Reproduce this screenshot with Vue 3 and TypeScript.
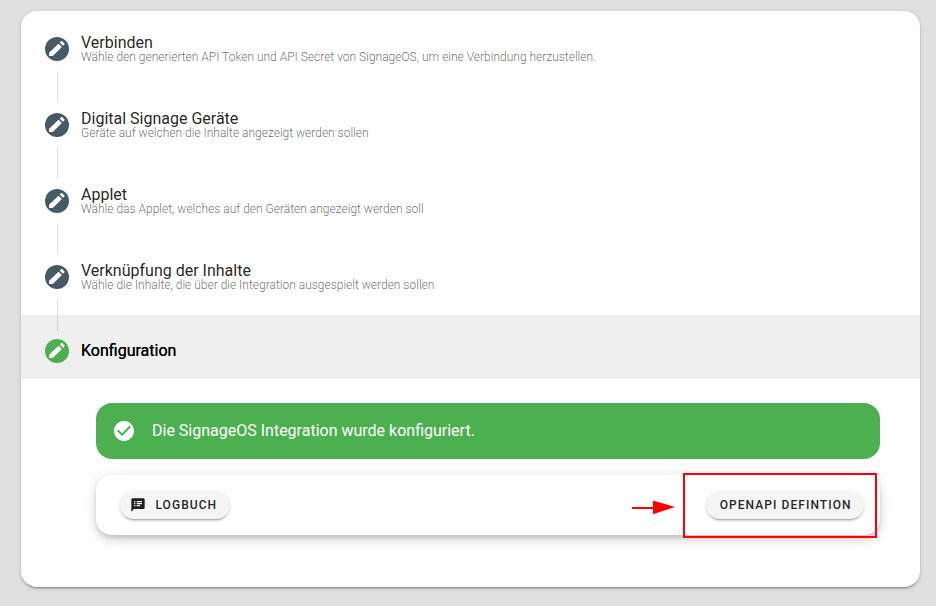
<script setup lang="ts">
interface Step {
  title: string
  hint: string
}

const steps: Step[] = [
  { title: 'Verbinden', hint: 'Wähle den generierten API Token und API Secret von SignageOS, um eine Verbindung herzustellen.' },
  { title: 'Digital Signage Geräte', hint: 'Geräte auf welchen die Inhalte angezeigt werden sollen' },
  { title: 'Applet', hint: 'Wähle das Applet, welches auf den Geräten angezeigt werden soll' },
  { title: 'Verknüpfung der Inhalte', hint: 'Wähle die Inhalte, die über die Integration ausgespielt werden sollen' },
]

const pencil =
  'M4 16.6Q4 16 4.4 15.6L13.5 6.8L16.9 10L8 18.7Q7.6 19 7 19H4.8Q4 19 4 18.2ZM14.7 5.6L16.1 4.3Q16.7 3.8 17.3 4.3L19.3 6.2Q19.9 6.8 19.3 7.4L18 8.7Z'
</script>

<template>
  <main class="page">
    <section class="stepper">
      <div v-for="step in steps" :key="step.title" class="step">
        <div class="rail">
          <span class="badge">
            <svg viewBox="0 0 24 24" width="24" height="24"><path :d="pencil" /></svg>
          </span>
          <span class="line"></span>
        </div>
        <div class="label">
          <div class="title">{{ step.title }}</div>
          <div class="hint">{{ step.hint }}</div>
        </div>
      </div>

      <div class="step active">
        <span class="badge">
          <svg viewBox="0 0 24 24" width="24" height="24"><path :d="pencil" /></svg>
        </span>
        <div class="title">Konfiguration</div>
      </div>

      <div class="content">
        <div class="alert">
          <svg viewBox="0 0 24 24" width="24" height="24">
            <path d="M12 2C6.5 2 2 6.5 2 12S6.5 22 12 22 22 17.5 22 12 17.5 2 12 2M10 17L5 12L6.41 10.59L10 14.17L17.59 6.58L19 8L10 17Z" />
          </svg>
          <span class="message">Die SignageOS Integration wurde konfiguriert.</span>
        </div>

        <div class="actions">
          <button class="btn log" type="button">
            <svg viewBox="0 0 24 24" width="16" height="16">
              <path d="M20 2H4C2.9 2 2 2.9 2 4V22L6 18H20C21.1 18 22 17.1 22 16V4C22 2.9 21.1 2 20 2M8 14H6V12H8V14M8 11H6V9H8V11M8 8H6V6H8V8M15 14H10V12H15V14M18 11H10V9H18V11M18 8H10V6H18V8Z" />
            </svg>
            <span>Logbuch</span>
          </button>
          <button class="btn" type="button">OpenAPI Defintion</button>
          <svg class="arrow" viewBox="0 0 44 16" width="44" height="16">
            <path d="M0 7H21V0.4L43 7L21 14.2V9H0Z" />
          </svg>
          <span class="marker"></span>
        </div>
      </div>
    </section>
  </main>
</template>

<style>
body {
  background: #e0e0e0;
}
</style>

<style scoped>
.page {
  box-sizing: border-box;
  height: 606px;
  padding: 11px 16px 19px 21px;
  background: #e0e0e0;
  font-family: Roboto, "Liberation Sans", sans-serif;
  color: rgba(0, 0, 0, 0.87);
}
.stepper {
  height: 576px;
  border-radius: 16px;
  background: #fff;
  box-shadow: 0 3px 1px -2px rgba(0, 0, 0, 0.2), 0 2px 2px 0 rgba(0, 0, 0, 0.14), 0 1px 5px 0 rgba(0, 0, 0, 0.12);
}
.step {
  box-sizing: border-box;
  display: flex;
  height: 76px;
  padding: 0 24px;
}
.rail {
  position: relative;
  z-index: 1;
  display: flex;
  flex-direction: column;
  align-items: center;
  width: 24px;
  margin-right: 12px;
  padding-top: 26px;
}
.badge {
  display: flex;
  flex: none;
  align-items: center;
  justify-content: center;
  width: 24px;
  height: 24px;
  border-radius: 50%;
  background: #455a64;
}
.badge svg,
.alert svg {
  fill: #fff;
}
.line {
  flex: none;
  width: 1px;
  height: 32px;
  margin: 10px 0 0 1px;
  background: rgba(0, 0, 0, 0.12);
}
.label {
  padding-top: 24px;
}
.title {
  font-size: 16px;
  line-height: 16px;
}
.hint {
  font-size: 12px;
  font-weight: 300;
  line-height: 12px;
  color: rgba(0, 0, 0, 0.6);
}
.active {
  gap: 12px;
  align-items: center;
  height: 64px;
  padding-top: 8px;
  background: #efefef;
}
.active .badge {
  background: #4caf50;
}
.active .title {
  color: #000;
  text-shadow: 0 0 0 #000;
}
.content {
  padding: 24px 40px 0 75px;
}
.alert {
  display: flex;
  align-items: center;
  gap: 16px;
  height: 56px;
  padding: 0 16px;
  border-radius: 16px;
  background: #4caf50;
  color: #fff;
  font-size: 16px;
}
.message {
  padding-bottom: 2px;
}
.actions {
  position: relative;
  box-sizing: border-box;
  display: flex;
  align-items: center;
  justify-content: space-between;
  height: 60px;
  margin-top: 16px;
  padding: 0 16px 0 24px;
  border-radius: 16px;
  background: #fff;
  box-shadow: 0 3px 5px -1px rgba(0, 0, 0, 0.16), 0 6px 10px 0 rgba(0, 0, 0, 0.09), 0 1px 18px 0 rgba(0, 0, 0, 0.09);
}
.btn {
  display: flex;
  align-items: center;
  height: 28px;
  padding: 0 12.4px 0 14px;
  border: 0;
  border-radius: 14px;
  background: #f5f5f5;
  box-shadow: 0 3px 1px -2px rgba(0, 0, 0, 0.2), 0 2px 2px 0 rgba(0, 0, 0, 0.12), 0 1px 5px 0 rgba(0, 0, 0, 0.08);
  color: rgba(0, 0, 0, 0.87);
  font-family: inherit;
  font-size: 12px;
  font-weight: 500;
  letter-spacing: 1.07px;
  text-transform: uppercase;
}
.log {
  gap: 9.6px;
  padding-right: 13px;
  padding-left: 9.8px;
}
.btn svg {
  fill: currentColor;
}
.arrow {
  position: absolute;
  top: 25px;
  left: 536px;
  fill: #f00;
}
.marker {
  position: absolute;
  top: -2px;
  left: 587px;
  box-sizing: border-box;
  width: 194px;
  height: 65px;
  border: 2px solid #f00;
}
</style>
